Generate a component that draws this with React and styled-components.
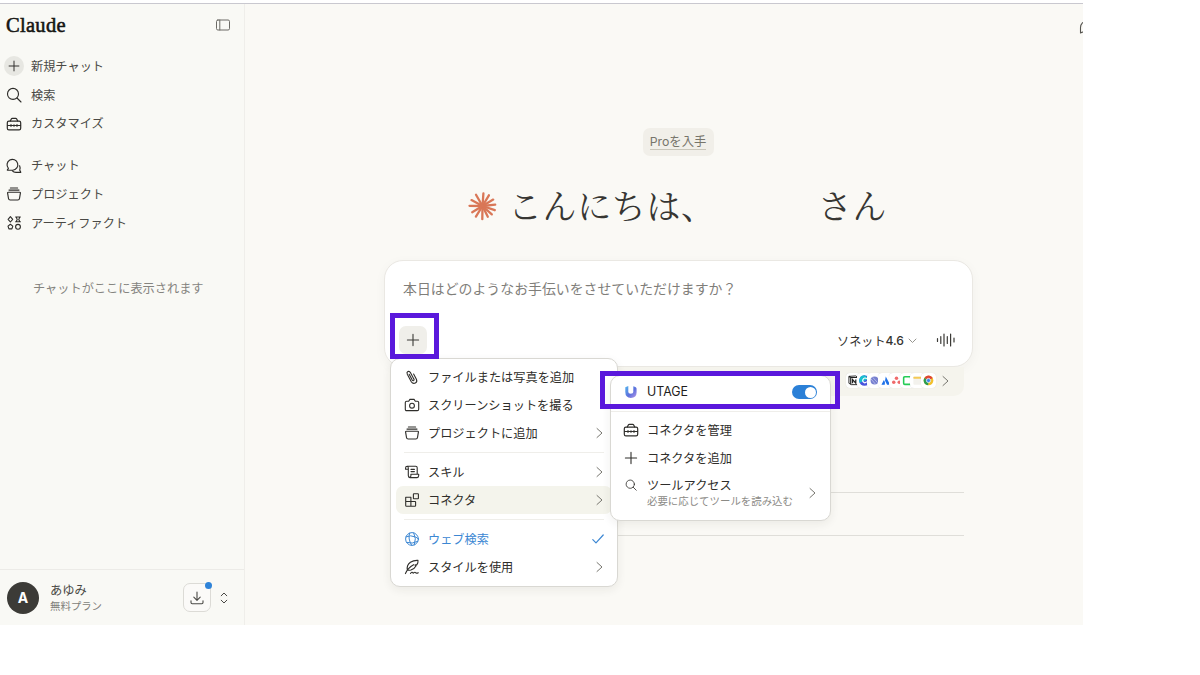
import React from "react";
import styled, { createGlobalStyle, css } from "styled-components";

const sans = `"Inter", "Noto Sans CJK JP", sans-serif`;

const Global = createGlobalStyle`
  *, *::before, *::after { box-sizing: border-box; }
  body { margin: 0; background: #fff; font-family: ${sans}; overflow: hidden; }
`;

/* ---------- shell ---------- */
const Page = styled.div`
  width: 1200px;
  height: 675px;
  background: #fff;
  padding-top: 3px;
  overflow: hidden;
`;
const Window = styled.div`
  position: relative;
  display: flex;
  width: 1083px;
  height: 622px;
  border-top: 1px solid #c9c8cf;
  background: #faf9f5;
  overflow: hidden;
`;

/* ---------- sidebar ---------- */
const Sidebar = styled.aside`
  display: flex;
  flex-direction: column;
  width: 245px;
  flex: none;
  border-right: 1px solid #efeeea;
  background: #f9f9f5;
`;
const SideHead = styled.header`
  display: flex;
  align-items: center;
  justify-content: space-between;
  height: 42px;
  padding: 0 13px 0 6px;
  color: #6c6b66;
`;
const Wordmark = styled.div`
  font-family: "Liberation Serif", serif;
  font-size: 20.5px;
  line-height: 24px;
  letter-spacing: 0.3px;
  color: #151513;
  -webkit-text-stroke: 0.55px #151513;
`;
const Nav = styled.nav`
  display: flex;
  flex-direction: column;
  margin-top: ${(p) => p.$top}px;
`;
const NavItem = styled.a`
  display: flex;
  align-items: center;
  height: 28.7px;
  padding-left: 4px;
  gap: 7px;
  font-size: 12.2px;
  color: #4a4945;
`;
const NavLabel = styled.span`
  padding-bottom: 1px;
`;
const NavIcon = styled.span`
  display: grid;
  place-items: center;
  width: 20px;
  height: 20px;
  border-radius: 50%;
  background: ${(p) => (p.$filled ? "#e7e7e2" : "transparent")};
  color: #2c2b28;
`;
const EmptyNote = styled.p`
  margin: 41px 0 0 33px;
  font-size: 12.2px;
  line-height: 20px;
  color: #85847f;
`;
const Account = styled.footer`
  display: flex;
  align-items: center;
  height: 56px;
  margin-top: auto;
  padding: 0 16px 0 7px;
  border-top: 1px solid #ecebe7;
  color: #4a4945;
`;
const Avatar = styled.div`
  display: grid;
  place-items: center;
  width: 32px;
  height: 32px;
  border-radius: 50%;
  background: #3c3b37;
  color: #fff;
  font-size: 14px;
  font-weight: 700;
`;
const Who = styled.div`
  display: flex;
  flex-direction: column;
  flex: 1;
  margin-left: 11px;
  padding-top: 1px;
  font-size: 12.3px;
  line-height: 16px;
  small { font-size: 10.4px; line-height: 15px; color: #7f7e79; }
`;
const DownloadButton = styled.div`
  position: relative;
  display: grid;
  place-items: center;
  width: 28px;
  height: 29px;
  margin-right: 9px;
  border: 1px solid #dcdbd6;
  border-radius: 7px;
  background: #fbfaf8;
`;
const Dot = styled.i`
  position: absolute;
  top: -2px;
  right: -2px;
  width: 7px;
  height: 7px;
  border-radius: 50%;
  background: #2f83d8;
`;

/* ---------- main ---------- */
const Main = styled.main`
  display: flex;
  flex-direction: column;
  align-items: center;
  flex: 1;
  padding-top: 124px;
  padding-left: 28px;
`;
const ProPill = styled.div`
  display: grid;
  place-items: center;
  width: 71px;
  height: 28px;
  border-radius: 7px;
  background: #f1efe9;
  font-size: 12.3px;
  color: #77756b;
  span { line-height: 15px; border-bottom: 1px solid #c9c6ba; white-space: nowrap; }
`;
const Greeting = styled.h1`
  display: flex;
  align-items: center;
  width: 420px;
  height: 50px;
  margin: 25px 0 0;
  font-family: "Noto Serif CJK JP", "Noto Serif JP", "Noto Sans CJK JP", serif;
  font-size: 34px;
  font-weight: 400;
  letter-spacing: 0.6px;
  color: #373632;
  white-space: nowrap;
`;
const Hello = styled.span`
  width: 310px;
  margin-left: 11px;
  margin-top: -4px;
`;
const San = styled.span`
  margin-top: -4px;
`;
const Composer = styled.section`
  display: flex;
  flex-direction: column;
  justify-content: space-between;
  width: 589px;
  height: 107px;
  margin-top: 29px;
  margin-left: 1px;
  padding: 18px 16px 12px 18px;
  border: 1px solid #eae8e3;
  border-radius: 19px;
  background: #fff;
  box-shadow: 0 3px 12px rgba(60, 55, 40, 0.04);
`;
const Placeholder = styled.div`
  font-size: 13.9px;
  line-height: 21px;
  color: #7f7e7a;
`;
const Tools = styled.div`
  display: flex;
  align-items: center;
  height: 28px;
  margin-left: -4px;
  color: #3b3a36;
`;
const PlusButton = styled.div`
  display: grid;
  place-items: center;
  width: 28px;
  height: 28px;
  margin-right: auto;
  border-radius: 7px;
  background: #f0efea;
`;
const Model = styled.div`
  display: flex;
  align-items: center;
  gap: 4px;
  margin-right: 19px;
  font-size: 12.1px;
  color: #33322f;
  b { font-weight: 500; margin-left: -4px; }
`;
const Strip = styled.div`
  display: flex;
  align-items: center;
  justify-content: flex-end;
  width: 572px;
  height: 29px;
  padding: 0 14px 2px 0;
  border-radius: 0 0 10px 10px;
  background: #f5f4ed;
  color: #77766f;
`;
const AppBadge = styled.span`
  display: grid;
  place-items: center;
  width: 15px;
  height: 15px;
  margin-left: -4.3px;
  border-radius: 4px;
  background: #fff;
  box-shadow: 0 0 1px rgba(0, 0, 0, 0.15);
`;
const StripGap = styled.span`
  width: 5px;
`;
const Suggestions = styled.div`
  width: 572px;
  margin-top: 54px;
`;
const Suggestion = styled.div`
  height: 43px;
  border-bottom: 1px solid #dfded9;
`;

/* ---------- menus ---------- */
const popup = css`
  position: absolute;
  border: 1px solid #d9d8d3;
  background: #fff;
  box-shadow: 0 3px 10px rgba(40, 38, 30, 0.07);
`;
const Menu = styled.div`
  ${popup}
  left: 390px;
  top: 354px;
  width: 228px;
  height: 229px;
  padding: 4px 5px 5px;
  border-radius: 10px;
`;
const SubMenu = styled.div`
  ${popup}
  left: 610px;
  top: 371px;
  width: 221px;
  height: 146px;
  border-radius: 10px;
`;
const Row = styled.div`
  display: flex;
  align-items: center;
  height: 28px;
  padding: 0 13px 0 12px;
  gap: 8px;
  border-radius: 7px;
  font-size: 12.2px;
  white-space: nowrap;
  background: ${(p) => (p.$active ? "#f4f4ec" : "transparent")};
  color: ${(p) => (p.$blue ? "#3c87d3" : "#2f2e2b")};
`;
const MenuRow = styled(Row)`
  padding: 0 8px;
`;
const RowLabel = styled.span`
  flex: 1;
  padding-bottom: 1px;
`;
const Rule = styled.hr`
  height: 1px;
  margin: 5px 8px;
  border: 0;
  background: #efeeea;
`;
const SubRule = styled(Rule)`
  margin: 3px 0 4px;
`;
const ToggleRow = styled(Row)`
  height: 32px;
  margin-bottom: 1px;
  color: #1f1e1c;
  font-size: 12.4px;
`;
const AccessRow = styled(Row)`
  height: 44px;
  padding-bottom: 2px;
`;
const SmallIcon = styled.span`
  display: grid;
  place-items: center;
  align-self: flex-start;
  width: 16px;
  height: 26px;
`;
const TwoLine = styled.span`
  display: flex;
  flex: 1;
  flex-direction: column;
  line-height: 17px;
  small { font-size: 10.43px; line-height: 15px; color: #8b8a86; }
`;
const Toggle = styled.i`
  display: flex;
  justify-content: flex-end;
  width: 25px;
  height: 14px;
  padding: 1.5px;
  border-radius: 7px;
  background: #2b80d7;
  &::after { content: ""; width: 11px; height: 11px; border-radius: 50%; background: #fff; }
`;
const Highlight = styled.div`
  position: absolute;
  left: ${(p) => p.$x}px;
  top: ${(p) => p.$y}px;
  width: ${(p) => p.$w}px;
  height: ${(p) => p.$h}px;
  border: 5px solid #5a18dc;
  pointer-events: none;
`;
const CornerIcon = styled.div`
  position: absolute;
  top: 16px;
  right: -12px;
  color: #55544f;
`;
const Icon = styled.svg`
  display: block;
  flex: none;
`;

/* ---------- icons ---------- */
const Svg = ({ s = 16, w = 1.1, children, vb = "0 0 16 16", width }) => (
  <Icon width={width || s} height={s} viewBox={vb} fill="none" stroke="currentColor" strokeWidth={w} strokeLinecap="round" strokeLinejoin="round">
    {children}
  </Icon>
);
const PanelIcon = () => (
  <Svg w={1}><rect x="1.5" y="3" width="13" height="10" rx="1.4" /><path d="M4.800 3v10" /></Svg>
);
const Plus = ({ s = 16 }) => <Svg s={s}><path d="M8 2.4v11.2M2.4 8h11.2" /></Svg>;
const SearchIcon = ({ s = 16 }) => <Svg s={s}><circle cx="7" cy="6.9" r="5.5" /><path d="M11 11l4 4" /></Svg>;
const Toolbox = () => (
  <Svg w={1.2}>
    <rect x="1.3" y="5.1" width="13.4" height="8.7" rx="1.6" />
    <path d="M4.3 5l1-2q.3-.6 1-.6h3.4q.7 0 1 .6l1 2M1.5 9.5h13M5 8.7v1.6M11 8.7v1.6M8 8.8v1.4" />
  </Svg>
);
const Chats = () => (
  <Svg w={1.15}>
    <path d="M1.3 12.1l1.1-1.7a5.4 5.4 0 1 1 4.3 1.8z" />
    <path d="M13.600 7.800q1 2.100.1 4.300l1.100 2.200H10q-2.400 0-3.600-1.500" />
  </Svg>
);
const Stack = () => (
  <Svg w={1.15}>
    <path d="M4.4 2h7.2M3 4.1h10" />
    <path d="M2.5 6.2h11q1 0 .9.9l-.9 5.4q-.2 1.5-1.7 1.5H4.2q-1.5 0-1.7-1.5l-.9-5.4q-.1-.9.9-.9z" />
  </Svg>
);
const Shapes = () => (
  <Svg w={1.1}>
    <path d="M4.400 1.600l2.300 2.700-2.300 2.700-2.300-2.700z" />
    <path d="M9.600 2h4.800M9.600 6.800h4.800M10.500 2v.8q1.500 1.600 0 3.200v.8M13.500 2v.8q-1.500 1.600 0 3.200v.8" />
    <path d="M4.400 9.300l2.400 1.800-.9 2.800H2.900L2 11.100z" />
    <circle cx="12" cy="11.800" r="2.400" />
  </Svg>
);
const Download = () => <Svg s={16}><path d="M8 2v8M4.800 7.100L8 10.300l3.200-3.200M2 10.800v1.700q0 1.200 1.200 1.200h9.600q1.200 0 1.200-1.200v-1.700" /></Svg>;
const UpDown = () => <Svg s={14} w={1} width={8} vb="0 0 8 14"><path d="M1.200 4.800L4 2l2.800 2.800M1.200 9.200L4 12l2.800-2.800" /></Svg>;
const ChevronRight = () => <Svg s={12} width={9} w={1} vb="0 0 9 12"><path d="M2 1.500l5 4.500-5 4.500" stroke="#77766f" /></Svg>;
const ChevronDown = () => <Svg s={9} w={1} vb="0 0 9 9"><path d="M1 3l3.500 3.500L8 3" stroke="#96958f" /></Svg>;
const Clip = () => (
  <Svg w={1.1}>
    <path d="M5.200 5.300l2.900 5.500q.7 1.200 1.500.8.9-.5.2-1.700L6.400 3.600q-1-1.800-2.500-1t-.6 2.600l4 7.500q1.500 2.400 4 1.400 2.300-1.400 1.100-3.900L9.600 5" />
  </Svg>
);
const Camera = () => (
  <Svg>
    <path d="M2.700 4.200h2L5.900 2.400h4.200l1.200 1.800h2q1.400 0 1.400 1.400v6.600q0 1.400-1.400 1.400H2.700q-1.400 0-1.400-1.400V5.600q0-1.400 1.400-1.400z" />
    <circle cx="8" cy="8.700" r="2.400" />
  </Svg>
);
const Scroll = () => (
  <Svg>
    <path d="M4.200 5.200H1.600V3.900q0-1.700 1.500-1.700h8.600q1.500 0 1.500 1.500v6.500M3.100 2.200q1.200.2 1.200 1.700v7.700q0 2 1.600 2h7.200q1.600 0 1.600-2v-1.300H6.900v1.400q0 1.700-1.300 1.700M7 5.400h3.400M7 7.600h3.400" />
  </Svg>
);
const Blocks = () => (
  <Svg>
    <path d="M1.700 5.300h5.200v8.900H2.500q-.8 0-.8-.8zM1.700 9.500h9.400q.5 0 .5.500v3.500q0 .7-.7.700H6.900" />
    <rect x="9.400" y="1.700" width="5" height="5" rx=".5" />
  </Svg>
);
const Globe = () => (
  <Svg w={1}>
    <circle cx="8" cy="8" r="6.400" />
    <path d="M2 5.800q4.500-2.200 9.800.3 1.800.9 2.500 2M2.600 11.400q5.700 1.900 11.100-1M5.600 2.200q-2 5.400 2 12M9.800 1.900q3 5.700.5 11.900" />
  </Svg>
);
const Feather = () => (
  <Svg>
    <path d="M1.400 14.600q2.300-5.700 8.200-8.900M3.400 11q-1.100-4.500 3-7.700 3.400-2.200 7.600-1.900.3 2.300-1.100 4.200l-2 .5 1.200.6q-1.700 3.300-5.200 4.300-2.200.5-3.500 0" />
    <path d="M6.500 14.300q1.700-1.700 2.300-.7.200 1 1.200.1 1-.9 1.500 0 .8.900 2.800 0" />
  </Svg>
);
const Check = () => <Svg s={12} w={1.2} vb="0 0 12 12"><path d="M.8 6.600l3.200 3.300L11.200 2" /></Svg>;
const Wave = () => (
  <Svg s={16} width={20} w={1.2} vb="0 0 20 16"><path d="M1.500 6.500v3M4.800 4.500v7M8 2v12M11.300 4.500v7M14.600 2v12M18 6v4" /></Svg>
);
const Burst = () => (
  <Icon width="29" height="30" viewBox="-14.5 -15 29 30">
    <g stroke="#d97757" strokeWidth="2.300" strokeLinecap="round">
      {[[4, 12.5], [31, 12.5], [59, 12.5], [84, 12.8], [109, 13], [132, 12.5], [154, 12], [181, 13.2], [212, 12.5], [239, 12], [271, 13], [298, 12.5], [330, 13]].map(([a, r]) => (
        <path key={a} d={`M0 0L${(r * Math.sin((a * Math.PI) / 180)).toFixed(1)} ${(-r * Math.cos((a * Math.PI) / 180)).toFixed(1)}`} />
      ))}
    </g>
  </Icon>
);
const UtageMark = () => (
  <Icon width="16" height="16" viewBox="0 0 16 16">
    <defs><linearGradient id="ut" x1="0" y1="0" x2="1" y2="1"><stop offset="0" stopColor="#55b5ee" /><stop offset=".55" stopColor="#5d70dc" /><stop offset="1" stopColor="#b79ae8" /></linearGradient></defs>
    <path d="M2.300 3.200l3-1.200v6q0 1.700 2.500 1.700t2.500-1.700V2.200q3.300.8 3.300 2.500v3.700q0 5.200-5.800 5.500-5.500-.3-5.500-6z" fill="url(#ut)" />
  </Icon>
);
const appDrawings = [
  <g key="n"><path d="M1 1.500l7.500-.5 2 1.500v8H3.500L1 9z" fill="#fff" stroke="#222" strokeWidth="1" /><path d="M1 1.500l2 1.200h7.500M3 2.700v7.500" stroke="#222" strokeWidth="1.300" fill="none" /><path d="M5 9V5l3.500 4V5" stroke="#222" strokeWidth="1.300" fill="none" /></g>,
  <g key="c"><circle cx="6" cy="6" r="5.800" fill="#4a55dd" /><path d="M6 .2A5.800 5.800 0 0 0 .8 8.500L11.200 4z" fill="#19c0cf" /><path d="M8.500 4Q6 2.200 4.500 4.700T6 8.500q1.500 0 2.500-1.300" stroke="#fff" fill="none" strokeWidth="1.300" /></g>,
  <g key="l"><circle cx="6" cy="6" r="4.300" fill="#7780cf" /><path d="M2 4l5 6M4 2.500L9.500 8.500" stroke="#c5c9f3" strokeWidth=".8" /></g>,
  <path key="a" d="M6.300 1.500L11 10.500H7.700L5.500 6.200zM4.200 5.500q2.200 2.500 1 5H1.600z" fill="#1d70e8" />,
  <g key="s" fill="#f06a6a"><circle cx="6" cy="3.500" r="1.900" /><circle cx="3" cy="8" r="1.900" /><circle cx="9" cy="8" r="1.900" /></g>,
  <path key="m" d="M9.500 4V2H3Q1.800 2 1.800 3.200V9Q1.800 10.200 3 10.200H9.500V8.500" stroke="#24cc55" strokeWidth="1.700" fill="none" />,
  <g key="y"><rect x="1.500" y="1.500" width="9" height="9" rx="1" fill="#f3f2ed" /><rect x="1.500" y="1.800" width="9" height="2.300" rx=".5" fill="#f5ca55" /></g>,
  <g key="g"><circle cx="6" cy="6" r="5.300" fill="#f2c02c" /><path d="M6 6L1.500 3.200A5.300 5.300 0 0 1 10.600 3.300z" fill="#de4635" /><path d="M6 6L1.500 3.200A5.300 5.300 0 0 0 5.600 11.300z" fill="#2a9c50" /><circle cx="6" cy="6" r="2.300" fill="#4086ee" stroke="#fff" strokeWidth=".8" /></g>,
];

const primary = [
  ["新規チャット", <Plus s={14} key="i" />, true],
  ["検索", <SearchIcon key="i" />],
  ["カスタマイズ", <Toolbox key="i" />],
];
const secondary = [
  ["チャット", <Chats key="i" />],
  ["プロジェクト", <Stack key="i" />],
  ["アーティファクト", <Shapes key="i" />],
];

const NavList = ({ items, top }) => (
  <Nav $top={top}>
    {items.map(([label, icon, filled]) => (
      <NavItem key={label}><NavIcon $filled={filled}>{icon}</NavIcon><NavLabel>{label}</NavLabel></NavItem>
    ))}
  </Nav>
);
const Item = ({ icon, label, end, ...rest }) => (
  <MenuRow {...rest}>{icon}<RowLabel>{label}</RowLabel>{end}</MenuRow>
);

export default function App() {
  return (
    <Page>
      <Global />
      <Window>
        <Sidebar>
          <SideHead><Wordmark>Claude</Wordmark><PanelIcon /></SideHead>
          <NavList items={primary} top={6} />
          <NavList items={secondary} top={13.4} />
          <EmptyNote>チャットがここに表示されます</EmptyNote>
          <Account>
            <Avatar>A</Avatar>
            <Who>あゆみ<small>無料プラン</small></Who>
            <DownloadButton><Download /><Dot /></DownloadButton>
            <UpDown />
          </Account>
        </Sidebar>

        <Main>
          <ProPill><span>Proを入手</span></ProPill>
          <Greeting><Burst /><Hello>こんにちは、</Hello><San>さん</San></Greeting>
          <Composer>
            <Placeholder>本日はどのようなお手伝いをさせていただけますか？</Placeholder>
            <Tools>
              <PlusButton><Plus /></PlusButton>
              <Model>ソネット<b>4.6</b><ChevronDown /></Model>
              <Wave />
            </Tools>
          </Composer>
          <Strip>
            {appDrawings.map((d, i) => (
              <AppBadge key={i}><Icon width="11" height="11" viewBox="0 0 12 12">{d}</Icon></AppBadge>
            ))}
            <StripGap />
            <ChevronRight />
          </Strip>
          <Suggestions><Suggestion /><Suggestion /></Suggestions>
        </Main>

        <CornerIcon><Svg s={16}><path d="M1.500 13V7.500a6.500 6.500 0 0 1 13 0V13l-2-1-2 1-2.500-1-2.500 1-2-1z" /></Svg></CornerIcon>

        <Menu>
          <Item icon={<Clip />} label="ファイルまたは写真を追加" />
          <Item icon={<Camera />} label="スクリーンショットを撮る" />
          <Item icon={<Stack />} label="プロジェクトに追加" end={<ChevronRight />} />
          <Rule />
          <Item icon={<Scroll />} label="スキル" end={<ChevronRight />} />
          <Item icon={<Blocks />} label="コネクタ" end={<ChevronRight />} $active />
          <Rule />
          <Item icon={<Globe />} label="ウェブ検索" end={<Check />} $blue />
          <Item icon={<Feather />} label="スタイルを使用" end={<ChevronRight />} />
        </Menu>

        <SubMenu>
          <ToggleRow><UtageMark /><RowLabel>UTAGE</RowLabel><Toggle /></ToggleRow>
          <SubRule />
          <Row><Toolbox /><RowLabel>コネクタを管理</RowLabel></Row>
          <Row><Plus /><RowLabel>コネクタを追加</RowLabel></Row>
          <AccessRow>
            <SmallIcon><SearchIcon s={12} /></SmallIcon>
            <TwoLine>ツールアクセス<small>必要に応じてツールを読み込む</small></TwoLine>
            <ChevronRight />
          </AccessRow>
        </SubMenu>

        <Highlight $x={390} $y={309} $w={49} $h={46} />
        <Highlight $x={600} $y={367} $w={240} $h={38} />
      </Window>
    </Page>
  );
}
